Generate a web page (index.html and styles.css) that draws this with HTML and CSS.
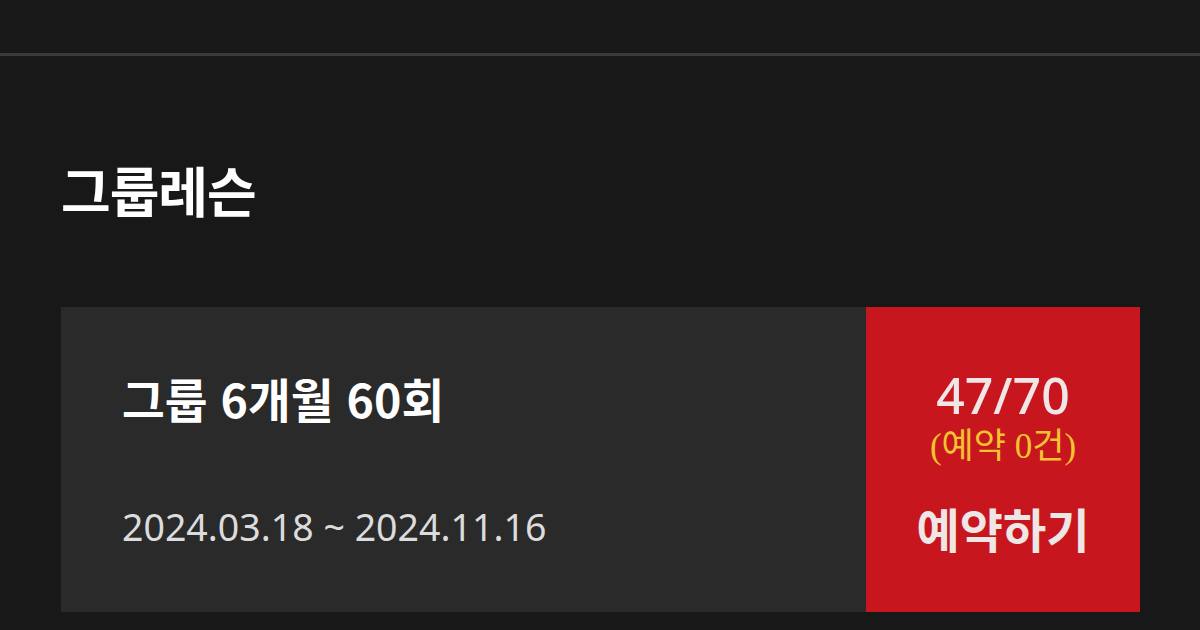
FILE: index.html
```html
<!DOCTYPE html>
<html lang="ko">
<head>
<meta charset="utf-8">
<link rel="stylesheet" href="styles.css">
</head>
<body>
<div class="topbar"></div>
<main class="content">
  <h1 class="section-title">그룹레슨</h1>
  <div class="card">
    <div class="card-info">
      <div class="card-name">그룹 6개월 60회</div>
      <div class="card-date">2024.03.18 ~ 2024.11.16</div>
    </div>
    <div class="card-action">
      <div class="count">47/70</div>
      <div class="reserved">(예약 0건)</div>
      <div class="book">예약하기</div>
    </div>
  </div>
</main>
</body>
</html>
```

FILE: styles.css
```css
html, body {
  margin: 0;
  padding: 0;
  background: #181818;
  width: 1200px;
  height: 630px;
  overflow: hidden;
  font-family: "Noto Sans CJK KR", "Noto Sans", sans-serif;
}
.topbar {
  height: 53px;
  border-bottom: 3px solid #3a3a3a;
}
.content {
  padding: 0 60px 0 61px;
}
.section-title {
  margin: 0;
  padding-top: 98px;
  font-size: 54px;
  line-height: 72px;
  font-weight: 700;
  color: #ffffff;
  letter-spacing: -1px;
}
.card {
  margin-top: 81px;
  display: flex;
  height: 305px;
  background: #2a2a2a;
}
.card-info {
  flex: 1;
  padding: 63px 0 0 61px;
}
.card-name {
  font-size: 46.5px;
  font-weight: 700;
  color: #ffffff;
  line-height: 56px;
}
.card-date {
  margin-top: 77px;
  font-family: "Noto Sans", sans-serif;
  font-size: 37.5px;
  line-height: 48px;
  color: #dcdcdc;
}
.card-action {
  width: 274px;
  background: #c8161f;
  display: flex;
  flex-direction: column;
  align-items: center;
  padding-top: 60px;
  box-sizing: border-box;
}
.count {
  font-family: "Noto Sans", sans-serif;
  font-weight: 500;
  font-size: 50px;
  line-height: 56px;
  color: #f0e6e6;
}
.reserved {
  margin-top: 4px;
  font-family: "Liberation Serif", "Noto Sans CJK KR", serif;
  font-size: 35px;
  line-height: 40px;
  color: #f3c330;
}
.book {
  margin-top: 31px;
  font-size: 47px;
  font-weight: 700;
  line-height: 60px;
  color: #efe6e6;
}
```
